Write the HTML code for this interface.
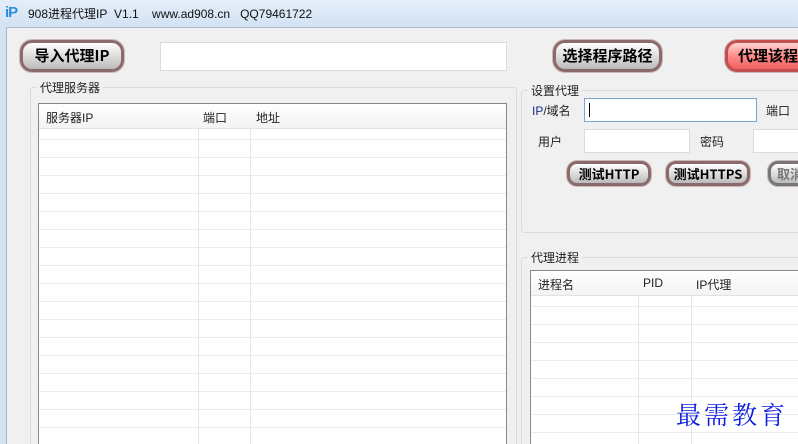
<!DOCTYPE html>
<html style="width:798px;height:444px;overflow:hidden"><head><meta charset="utf-8"><style>
*{margin:0;padding:0;box-sizing:border-box}
body{width:798px;height:444px;overflow:hidden;position:relative;background:#d4e3f3;font-family:"Liberation Sans","Noto Sans CJK SC",sans-serif;font-size:12px;color:#000}
.abs{position:absolute}
.title{left:0;top:0;width:798px;height:26px;background:linear-gradient(#e4eef9,#d3e2f3)}
.title span{position:absolute;left:28px;top:5px;font-size:12px;color:#111}
.ico{left:5px;top:4px;font:bold 15px "Liberation Sans",sans-serif;color:#2a8fd8;letter-spacing:-1px}
.client{left:6px;top:27px;width:792px;height:417px;background:#f0f0f0;border-left:1px solid #a9b9cc;border-top:1px solid #a9b9cc}
.btn{position:absolute;border-radius:12px;border:3px solid #8a6a6a;background:linear-gradient(#fff,#ddd 50%,#bbb);box-shadow:0 0 0 1px #c9b8b8;font-weight:bold;text-align:center;font-family:"Noto Sans CJK SC",sans-serif}
.edit{position:absolute;background:#fff;border:1px solid #dcdcdc}
.grp{position:absolute;border:1px solid #d8dcdf;border-radius:3px}
.grp b{position:absolute;left:6px;top:-9px;background:#f0f0f0;font-weight:normal;font-size:12px;padding:0 3px;color:#222}
.tbl{position:absolute;background:#fff;border:1px solid #828790;
background-image:repeating-linear-gradient(#fff 0,#fff 17px,#ececec 17px,#ececec 18px)}
.hdr{position:absolute;left:0;top:0;right:0;height:25px;background:linear-gradient(#fff,#f3f3f3);border-bottom:1px solid #e3e3e3}
.hdr span{position:absolute;top:5px;font-size:12px;color:#222}
.vl{position:absolute;top:0;bottom:0;width:1px;background:#e5e5e5}
.lbl{position:absolute;font-size:12px;color:#222}
</style></head><body>
<div class="abs title"><div class="abs ico">iP</div><span>908进程代理IP&nbsp; V1.1&nbsp;&nbsp;&nbsp; www.ad908.cn&nbsp;&nbsp; QQ79461722</span></div>
<div class="abs client"></div>

<div class="btn" style="left:20px;top:40px;width:104px;height:32px;font-size:15px;line-height:26px">导入代理IP</div>
<div class="edit" style="left:160px;top:42px;width:347px;height:29px"></div>
<div class="btn" style="left:553px;top:40px;width:109px;height:32px;font-size:15px;line-height:26px">选择程序路径</div>
<div class="btn" style="left:725px;top:40px;width:100px;height:32px;font-size:15px;line-height:26px;background:linear-gradient(#ffd4d4,#ff8a8a 50%,#ee6060);border-color:#c05050;text-align:left;padding-left:10px">代理该程序</div>

<div class="grp" style="left:30px;top:87px;width:487px;height:370px"><b>代理服务器</b></div>
<div class="tbl" style="left:38px;top:103px;width:469px;height:350px">
<div class="vl" style="left:159px"></div><div class="vl" style="left:211px"></div>
<div class="hdr"><span style="left:7px">服务器IP</span><span style="left:164px">端口</span><span style="left:217px">地址</span></div>
</div>

<div class="grp" style="left:521px;top:90px;width:290px;height:143px"><b>设置代理</b></div>
<div class="lbl" style="left:532px;top:102px"><span style="color:#1a2a8a">IP</span>/域名</div>
<div class="edit" style="left:584px;top:98px;width:173px;height:24px;border-color:#7aa7d6"><div style="position:absolute;left:4px;top:4px;width:1px;height:14px;background:#000"></div></div>
<div class="lbl" style="left:766px;top:102px">端口</div>
<div class="lbl" style="left:538px;top:133px">用户</div>
<div class="edit" style="left:584px;top:129px;width:106px;height:24px"></div>
<div class="lbl" style="left:700px;top:133px">密码</div>
<div class="edit" style="left:753px;top:129px;width:60px;height:24px"></div>
<div class="btn" style="left:567px;top:161px;width:84px;height:25px;font-size:13px;line-height:19px;border-radius:10px">测试HTTP</div>
<div class="btn" style="left:666px;top:161px;width:84px;height:25px;font-size:13px;line-height:19px;border-radius:10px">测试HTTPS</div>
<div class="btn" style="left:768px;top:161px;width:60px;height:25px;font-size:13px;line-height:19px;border-radius:10px;color:#777;border-color:#777;text-align:left;padding-left:6px">取消</div>

<div class="grp" style="left:521px;top:257px;width:290px;height:200px"><b>代理进程</b></div>
<div class="tbl" style="left:530px;top:270px;width:280px;height:190px">
<div class="vl" style="left:107px"></div><div class="vl" style="left:160px"></div>
<div class="hdr"><span style="left:7px">进程名</span><span style="left:112px">PID</span><span style="left:165px">IP代理</span></div>
</div>
<div class="abs" style="left:676px;top:396px;font-family:'WenQuanYi Zen Hei','Noto Serif CJK SC',serif;font-size:25px;color:#1020e0;letter-spacing:3px">最需教育</div>
</body></html>
